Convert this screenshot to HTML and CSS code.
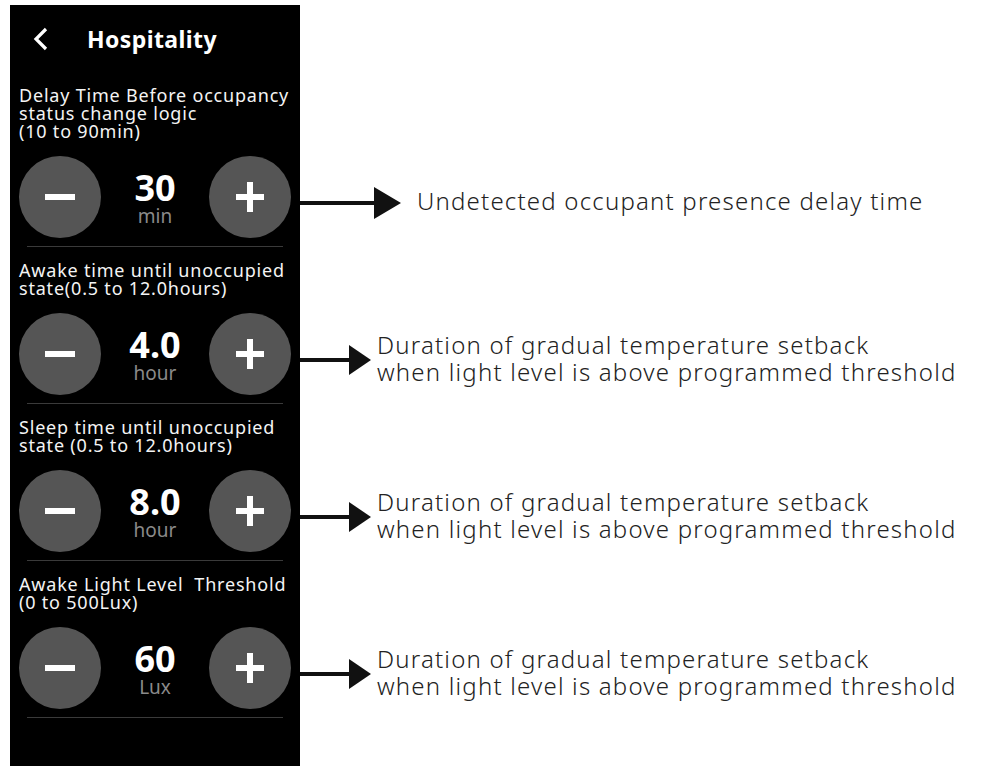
FILE: index.html
```html
<!DOCTYPE html>
<html lang="en">

<head>
  <meta charset="UTF-8">
  <meta name="viewport" content="width=device-width, initial-scale=1.0">
  <title>Hospitality</title>
  <link rel="stylesheet" href="styles.css">
</head>

<body>
  <div class="page">
    <div class="row">
      <div class="panel header">
        <svg class="back" width="18" height="24" viewBox="0 0 18 24">
          <polyline points="14,2 4,12 14,22" fill="none" stroke="#fff" stroke-width="3.2" />
        </svg>
        <h1>Hospitality</h1>
      </div>
    </div>

    <!-- Delay time -->
    <div class="row">
      <div class="panel label">Delay Time Before occupancy<br>status change logic<br>(10 to 90min)</div>
    </div>
    <div class="row">
      <div class="panel">
        <div class="stepper">
          <button class="step"><svg width="30" height="6"><rect width="30" height="6" fill="#fff" /></svg></button>
          <div class="value"><b>30</b><span>min</span></div>
          <button class="step"><svg width="28" height="30"><rect y="12" width="28" height="6" fill="#fff" /><rect x="11" width="6" height="30" fill="#fff" /></svg></button>
        </div>
        <hr class="divider">
      </div>
      <div class="note note-wide">
        <svg class="arrow" width="101" height="32" viewBox="0 0 101 32">
          <rect y="14" width="76" height="4" fill="#111" />
          <polygon points="74,0 101,16 74,32" fill="#111" />
        </svg>
        <p>Undetected occupant presence delay time</p>
      </div>
    </div>

    <!-- Awake time -->
    <div class="row">
      <div class="panel label">Awake time until unoccupied<br>state(0.5 to 12.0hours)</div>
    </div>
    <div class="row">
      <div class="panel">
        <div class="stepper">
          <button class="step"><svg width="30" height="6"><rect width="30" height="6" fill="#fff" /></svg></button>
          <div class="value"><b>4.0</b><span>hour</span></div>
          <button class="step"><svg width="28" height="30"><rect y="12" width="28" height="6" fill="#fff" /><rect x="11" width="6" height="30" fill="#fff" /></svg></button>
        </div>
        <hr class="divider">
      </div>
      <div class="note">
        <svg class="arrow" width="71" height="30" viewBox="0 0 71 30">
          <rect y="13" width="51" height="4" fill="#111" />
          <polygon points="49,0 71,15 49,30" fill="#111" />
        </svg>
        <p>Duration of gradual temperature setback<br>when light level is above programmed threshold</p>
      </div>
    </div>

    <!-- Sleep time -->
    <div class="row">
      <div class="panel label">Sleep time until unoccupied<br>state (0.5 to 12.0hours)</div>
    </div>
    <div class="row">
      <div class="panel">
        <div class="stepper">
          <button class="step"><svg width="30" height="6"><rect width="30" height="6" fill="#fff" /></svg></button>
          <div class="value"><b>8.0</b><span>hour</span></div>
          <button class="step"><svg width="28" height="30"><rect y="12" width="28" height="6" fill="#fff" /><rect x="11" width="6" height="30" fill="#fff" /></svg></button>
        </div>
        <hr class="divider">
      </div>
      <div class="note">
        <svg class="arrow" width="71" height="30" viewBox="0 0 71 30">
          <rect y="13" width="51" height="4" fill="#111" />
          <polygon points="49,0 71,15 49,30" fill="#111" />
        </svg>
        <p>Duration of gradual temperature setback<br>when light level is above programmed threshold</p>
      </div>
    </div>

    <!-- Light level -->
    <div class="row">
      <div class="panel label">Awake Light Level&nbsp; Threshold<br>(0 to 500Lux)</div>
    </div>
    <div class="row">
      <div class="panel">
        <div class="stepper">
          <button class="step"><svg width="30" height="6"><rect width="30" height="6" fill="#fff" /></svg></button>
          <div class="value"><b>60</b><span>Lux</span></div>
          <button class="step"><svg width="28" height="30"><rect y="12" width="28" height="6" fill="#fff" /><rect x="11" width="6" height="30" fill="#fff" /></svg></button>
        </div>
        <hr class="divider">
      </div>
      <div class="note">
        <svg class="arrow" width="71" height="30" viewBox="0 0 71 30">
          <rect y="13" width="51" height="4" fill="#111" />
          <polygon points="49,0 71,15 49,30" fill="#111" />
        </svg>
        <p>Duration of gradual temperature setback<br>when light level is above programmed threshold</p>
      </div>
    </div>

    <div class="row fill">
      <div class="panel"></div>
    </div>
  </div>
</body>

</html>
```

FILE: styles.css
```css
/* Page frame */
body {
  margin: 0;
  background: #fff;
  font-family: "Noto Sans", "DejaVu Sans", sans-serif;
}

.page {
  display: flex;
  flex-direction: column;
  min-height: 761px;
  padding: 5px 0 0 10px;
}

.row {
  display: flex;
}

.row.fill {
  flex: 1;
}

/* Black device screen */
.panel {
  width: 290px;
  flex-shrink: 0;
  background: #000;
  color: #fff;
}

.header {
  height: 67px;
  display: flex;
  align-items: center;
  padding-left: 22px;
  box-sizing: border-box;
}

.header h1 {
  margin: 0 0 0 37px;
  font-size: 23px;
  font-weight: 700;
  letter-spacing: 0.4px;
}

.label {
  padding: 14px 9px 16px;
  box-sizing: border-box;
  font-size: 18px;
  line-height: 18px;
  letter-spacing: 0.8px;
  color: #f4f4f4;
}

.stepper {
  display: flex;
  align-items: center;
  justify-content: space-between;
  padding: 0 9px;
}

.step {
  width: 82px;
  height: 82px;
  border-radius: 50%;
  border: 0;
  padding: 0;
  background: #555;
  display: flex;
  align-items: center;
  justify-content: center;
}

.value {
  display: flex;
  flex-direction: column;
  align-items: center;
}

.value b {
  font-size: 36px;
  line-height: 38px;
}

.value span {
  font-size: 19px;
  line-height: 18px;
  color: #8a8a8a;
}

.divider {
  margin: 8px 17px 0;
  height: 0;
  border: 0;
  border-top: 1px solid #3a3a3a;
}

/* Callouts on the white side */
.note {
  display: flex;
  align-items: center;
  height: 82px;
  padding-top: 6px;
  font-size: 24px;
  font-weight: 300;
  line-height: 27px;
  letter-spacing: 1.2px;
  color: #222;
}

.note p {
  margin: -5px 0 0 6px;
}

.note-wide p {
  margin-left: 16px;
}
```
